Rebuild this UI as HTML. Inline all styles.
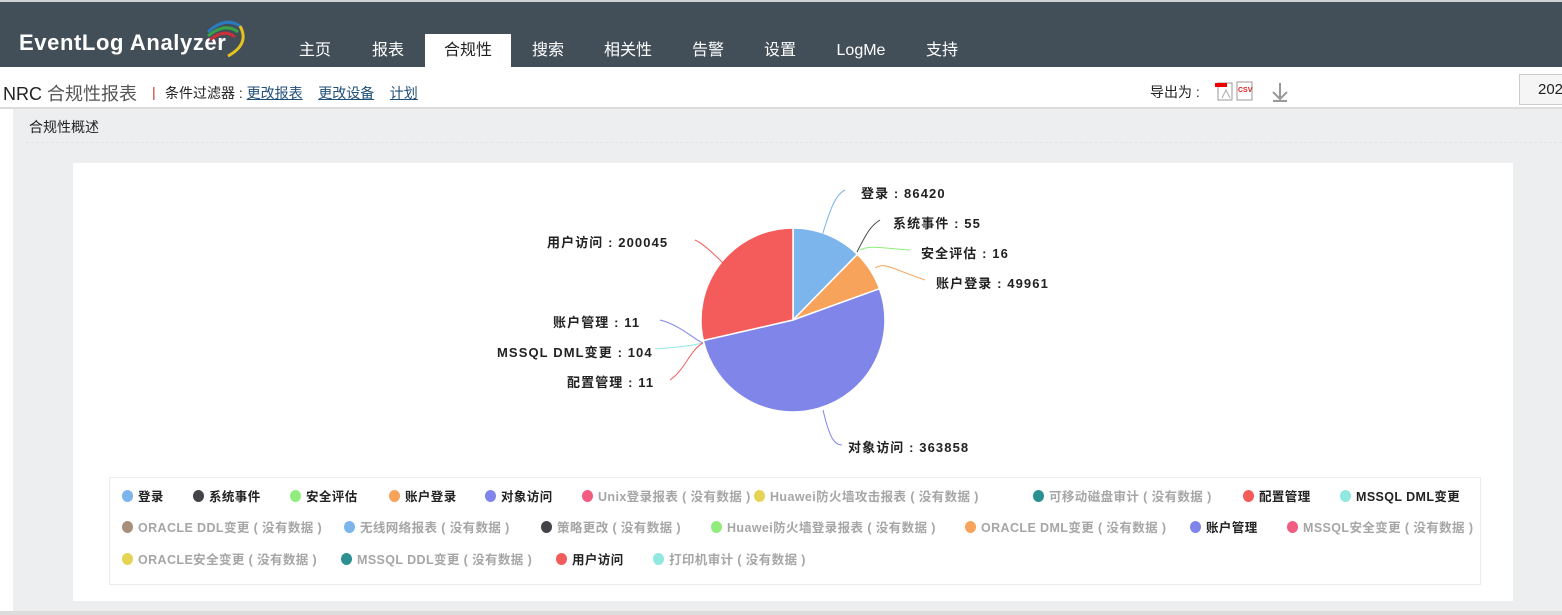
<!DOCTYPE html>
<html><head><meta charset="utf-8"><style>
*{margin:0;padding:0;box-sizing:border-box}
body{width:1562px;height:615px;overflow:hidden;background:#edeef0;font-family:"Liberation Sans","Noto Sans CJK SC",sans-serif;position:relative}
.abs{position:absolute;white-space:nowrap}
#top{position:absolute;left:0;top:0;width:1562px;height:67px;background:#434f58;border-top:2px solid #cfd2d4}
.tab{position:absolute;top:32px;height:35px;line-height:34px;color:#fff;font-size:16px;text-align:center}
.tab.act{background:#fff;color:#222}
#sub{position:absolute;left:0;top:67px;width:1562px;height:42px;background:#fff;border-bottom:2px solid #dcdcdc}
a{color:#1f4e79;text-decoration:underline}
.lg{position:absolute;font-size:12.5px;font-weight:bold;white-space:nowrap;height:16px;line-height:16px;letter-spacing:0.4px}
.lg i{display:inline-block;width:11px;height:12px;border-radius:50%;vertical-align:-1px;margin-right:5px}
.nd{color:#a6a6a6}.d{color:#222}
</style></head><body>
<div id="top">
 <div class="abs" style="left:19px;top:28px;color:#fff;font-size:22px;font-weight:bold;font-family:'Liberation Sans',sans-serif;letter-spacing:0.6px">EventLog Analyzer</div>
 <svg class="abs" style="left:200px;top:12px" width="50" height="45" viewBox="0 0 50 45">
  <path d="M8 18 Q25 2 40 12" stroke="#2a7ac0" stroke-width="3" fill="none"/>
  <path d="M8 22 Q25 8 38 18" stroke="#3aa049" stroke-width="3" fill="none"/>
  <path d="M10 26 Q24 14 35 23" stroke="#c8303a" stroke-width="3" fill="none"/>
  <path d="M40 12 Q50 30 28 42" stroke="#e8c21c" stroke-width="3" fill="none"/>
 </svg>
 <div class="tab" style="left:285px;width:60px">主页</div>
 <div class="tab" style="left:358px;width:60px">报表</div>
 <div class="tab act" style="left:425px;width:86px">合规性</div>
 <div class="tab" style="left:518px;width:60px">搜索</div>
 <div class="tab" style="left:592px;width:72px">相关性</div>
 <div class="tab" style="left:678px;width:60px">告警</div>
 <div class="tab" style="left:750px;width:60px">设置</div>
 <div class="tab" style="left:826px;width:70px">LogMe</div>
 <div class="tab" style="left:912px;width:60px">支持</div>
</div>
<div id="sub">
 <div class="abs" style="left:3px;top:13px;font-size:18px;color:#222">NRC <span style="color:#555">合规性报表</span></div>
 <div class="abs" style="left:152px;top:17px;font-size:14px;color:#c0392b">|</div>
 <div class="abs" style="left:165px;top:16px;font-size:14px;color:#222">条件过滤器 : <a>更改报表</a>&nbsp;&nbsp;&nbsp;&nbsp;<a>更改设备</a>&nbsp;&nbsp;&nbsp;&nbsp;<a>计划</a></div>
 <div class="abs" style="left:1150px;top:15px;font-size:14px;color:#222">导出为 :</div>
 <svg class="abs" style="left:1214px;top:13px" width="80" height="22">
  <rect x="4" y="3" width="14" height="17" fill="#fff" stroke="#999"/><rect x="1" y="3" width="12" height="4" fill="#e00"/>
  <path d="M8 18 L12 10 L16 18" stroke="#aaa" fill="none"/>
  <rect x="23" y="2" width="15" height="18" fill="#fff" stroke="#999"/><text x="24" y="12" font-size="7" fill="#d22" font-weight="bold" font-family="Liberation Sans">CSV</text>
  <path d="M66 3 V19 M59 12 L66 19 L73 12 M59 21 H73" stroke="#999" stroke-width="2" fill="none"/>
 </svg>
 <div class="abs" style="left:1519px;top:7px;width:50px;height:31px;border:1px solid #ccc;background:#f5f5f5;font-size:15px;line-height:29px;padding-left:18px;color:#222">202</div>
</div>
<div class="abs" style="left:0;top:109px;width:13px;height:506px;background:#fff"></div>
<div class="abs" style="left:29px;top:117px;font-size:14px;color:#222">合规性概述</div>
<div class="abs" style="left:26px;top:142px;width:1536px;border-top:1px dashed #e2e3e5"></div>
<div class="abs" style="left:0;top:611px;width:1562px;height:4px;background:#dcdcdc"></div>
<div class="abs" style="left:73px;top:163px;width:1440px;height:438px;background:#fff"></div>
<svg class="abs" style="left:0;top:0" width="1562" height="615" font-family="Liberation Sans,Noto Sans CJK SC,sans-serif" font-size="13" font-weight="bold" fill="#222" letter-spacing="1.1">
 <path d="M793 320 L793 228 A92 92 0 0 1 857.4 254.3 Z" fill="#7cb5ec" stroke="#fff" stroke-width="1.5"/>
 <path d="M793 320 L857.4 254.3 A92 92 0 0 1 879.5 288.7 Z" fill="#f7a35c" stroke="#fff" stroke-width="1.5"/>
 <path d="M793 320 L879.5 288.7 A92 92 0 1 1 703.3 340.5 Z" fill="#8085e9" stroke="#fff" stroke-width="1.5"/>
 <path d="M793 320 L703.3 340.5 A92 92 0 0 1 793 228 Z" fill="#f45b5b" stroke="#fff" stroke-width="1.5"/>
 <g fill="none" stroke-width="1">
  <path d="M822 236 C830 210 835 195 845 190" stroke="#7cb5ec"/>
  <path d="M857 252 C868 230 872 225 880 220" stroke="#434348"/>
  <path d="M860 250 C870 245 880 248 910 250" stroke="#90ed7d"/>
  <path d="M875 268 C885 262 890 268 925 280" stroke="#f7a35c"/>
  <path d="M823 410 C830 440 835 445 842 445" stroke="#8085e9"/>
  <path d="M723 263 C710 250 700 242 695 240" stroke="#f45b5b"/>
  <path d="M703 343 C695 340 680 325 660 320" stroke="#8085e9"/>
  <path d="M703 343 C690 346 680 347 655 349" stroke="#91e8e1"/>
  <path d="M703 343 C690 350 685 370 670 380" stroke="#f45b5b"/>
 </g>
 <text x="861" y="198">登录 : 86420</text>
 <text x="893" y="228">系统事件 : 55</text>
 <text x="921" y="258">安全评估 : 16</text>
 <text x="936" y="288">账户登录 : 49961</text>
 <text x="848" y="452">对象访问 : 363858</text>
 <text x="547" y="247">用户访问 : 200045</text>
 <text x="553" y="327">账户管理 : 11</text>
 <text x="497" y="357">MSSQL DML变更 : 104</text>
 <text x="567" y="387">配置管理 : 11</text>
</svg>
<div class="abs" style="left:109px;top:477px;width:1372px;height:108px;border:1px solid #ececec"></div>
<div class="lg d" style="left:122px;top:489px"><i style="background:#7cb5ec"></i>登录</div>
<div class="lg d" style="left:193px;top:489px"><i style="background:#434348"></i>系统事件</div>
<div class="lg d" style="left:290px;top:489px"><i style="background:#90ed7d"></i>安全评估</div>
<div class="lg d" style="left:389px;top:489px"><i style="background:#f7a35c"></i>账户登录</div>
<div class="lg d" style="left:485px;top:489px"><i style="background:#8085e9"></i>对象访问</div>
<div class="lg nd" style="left:582px;top:489px"><i style="background:#f15c80"></i>Unix登录报表 ( 没有数据 )</div>
<div class="lg nd" style="left:754px;top:489px"><i style="background:#e4d354"></i>Huawei防火墙攻击报表 ( 没有数据 )</div>
<div class="lg nd" style="left:1033px;top:489px"><i style="background:#2b908f"></i>可移动磁盘审计 ( 没有数据 )</div>
<div class="lg d" style="left:1243px;top:489px"><i style="background:#f45b5b"></i>配置管理</div>
<div class="lg d" style="left:1340px;top:489px"><i style="background:#91e8e1"></i>MSSQL DML变更</div>
<div class="lg nd" style="left:122px;top:520px"><i style="background:#a88f7b"></i>ORACLE DDL变更 ( 没有数据 )</div>
<div class="lg nd" style="left:344px;top:520px"><i style="background:#7cb5ec"></i>无线网络报表 ( 没有数据 )</div>
<div class="lg nd" style="left:541px;top:520px"><i style="background:#434348"></i>策略更改 ( 没有数据 )</div>
<div class="lg nd" style="left:711px;top:520px"><i style="background:#90ed7d"></i>Huawei防火墙登录报表 ( 没有数据 )</div>
<div class="lg nd" style="left:965px;top:520px"><i style="background:#f7a35c"></i>ORACLE DML变更 ( 没有数据 )</div>
<div class="lg d" style="left:1190px;top:520px"><i style="background:#8085e9"></i>账户管理</div>
<div class="lg nd" style="left:1287px;top:520px"><i style="background:#f15c80"></i>MSSQL安全变更 ( 没有数据 )</div>
<div class="lg nd" style="left:122px;top:552px"><i style="background:#e4d354"></i>ORACLE安全变更 ( 没有数据 )</div>
<div class="lg nd" style="left:341px;top:552px"><i style="background:#2b908f"></i>MSSQL DDL变更 ( 没有数据 )</div>
<div class="lg d" style="left:556px;top:552px"><i style="background:#f45b5b"></i>用户访问</div>
<div class="lg nd" style="left:653px;top:552px"><i style="background:#91e8e1"></i>打印机审计 ( 没有数据 )</div>
</body></html>
